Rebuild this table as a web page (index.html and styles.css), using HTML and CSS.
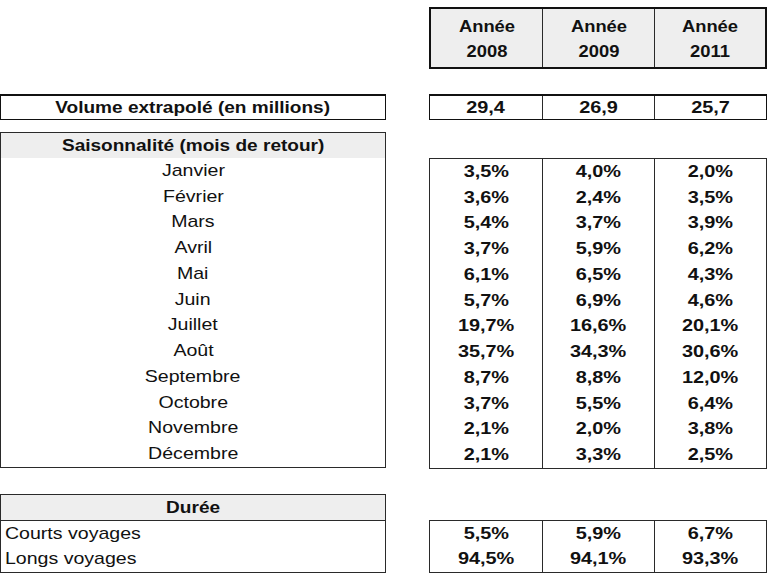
FILE: index.html
```html
<!DOCTYPE html>
<html lang="fr">
<head>
<meta charset="utf-8">
<title>Tableau</title>
<link rel="stylesheet" href="styles.css">
</head>
<body>
<div class="sheet">
  <section class="sec sec-head">
    <div class="left"></div>
    <div class="right box box-thick head">
      <div class="cell"><span class="t">Année<br>2008</span></div>
      <div class="cell"><span class="t">Année<br>2009</span></div>
      <div class="cell"><span class="t">Année<br>2011</span></div>
    </div>
  </section>

  <section class="sec sec-vol">
    <div class="left box box-vol">
      <div class="row title"><span class="t">Volume extrapolé (en millions)</span></div>
    </div>
    <div class="right box box-vol vals">
      <div class="cell num"><span class="t">29,4</span></div>
      <div class="cell num"><span class="t">26,9</span></div>
      <div class="cell num"><span class="t">25,7</span></div>
    </div>
  </section>

  <section class="sec sec-saison">
    <div class="left box">
      <div class="row title gray"><span class="t">Saisonnalité (mois de retour)</span></div>
      <div class="row month"><span class="t">Janvier</span></div>
      <div class="row month"><span class="t">Février</span></div>
      <div class="row month"><span class="t">Mars</span></div>
      <div class="row month"><span class="t">Avril</span></div>
      <div class="row month"><span class="t">Mai</span></div>
      <div class="row month"><span class="t">Juin</span></div>
      <div class="row month"><span class="t">Juillet</span></div>
      <div class="row month"><span class="t">Août</span></div>
      <div class="row month"><span class="t">Septembre</span></div>
      <div class="row month"><span class="t">Octobre</span></div>
      <div class="row month"><span class="t">Novembre</span></div>
      <div class="row month"><span class="t">Décembre</span></div>
    </div>
    <div class="right box offset vals">
      <div class="col">
        <div class="v"><span class="t">3,5%</span></div><div class="v"><span class="t">3,6%</span></div><div class="v"><span class="t">5,4%</span></div><div class="v"><span class="t">3,7%</span></div><div class="v"><span class="t">6,1%</span></div><div class="v"><span class="t">5,7%</span></div><div class="v"><span class="t">19,7%</span></div><div class="v"><span class="t">35,7%</span></div><div class="v"><span class="t">8,7%</span></div><div class="v"><span class="t">3,7%</span></div><div class="v"><span class="t">2,1%</span></div><div class="v"><span class="t">2,1%</span></div>
      </div>
      <div class="col">
        <div class="v"><span class="t">4,0%</span></div><div class="v"><span class="t">2,4%</span></div><div class="v"><span class="t">3,7%</span></div><div class="v"><span class="t">5,9%</span></div><div class="v"><span class="t">6,5%</span></div><div class="v"><span class="t">6,9%</span></div><div class="v"><span class="t">16,6%</span></div><div class="v"><span class="t">34,3%</span></div><div class="v"><span class="t">8,8%</span></div><div class="v"><span class="t">5,5%</span></div><div class="v"><span class="t">2,0%</span></div><div class="v"><span class="t">3,3%</span></div>
      </div>
      <div class="col">
        <div class="v"><span class="t">2,0%</span></div><div class="v"><span class="t">3,5%</span></div><div class="v"><span class="t">3,9%</span></div><div class="v"><span class="t">6,2%</span></div><div class="v"><span class="t">4,3%</span></div><div class="v"><span class="t">4,6%</span></div><div class="v"><span class="t">20,1%</span></div><div class="v"><span class="t">30,6%</span></div><div class="v"><span class="t">12,0%</span></div><div class="v"><span class="t">6,4%</span></div><div class="v"><span class="t">3,8%</span></div><div class="v"><span class="t">2,5%</span></div>
      </div>
    </div>
  </section>

  <section class="sec sec-duree">
    <div class="left box">
      <div class="row title gray sep"><span class="t">Durée</span></div>
      <div class="row dur"><span class="t">Courts voyages</span></div>
      <div class="row dur"><span class="t">Longs voyages</span></div>
    </div>
    <div class="right box offset vals">
      <div class="col"><div class="v vd"><span class="t">5,5%</span></div><div class="v vd"><span class="t">94,5%</span></div></div>
      <div class="col"><div class="v vd"><span class="t">5,9%</span></div><div class="v vd"><span class="t">94,1%</span></div></div>
      <div class="col"><div class="v vd"><span class="t">6,7%</span></div><div class="v vd"><span class="t">93,3%</span></div></div>
    </div>
  </section>
</div>
</body>
</html>
```

FILE: styles.css
```css
html, body {
  margin: 0;
  padding: 0;
  background: #ffffff;
}

body {
  font-family: "Liberation Sans", Arial, sans-serif;
  color: #111111;
}

.sheet {
  width: 770px;
  display: flex;
  flex-direction: column;
}

.sec {
  display: flex;
  align-items: flex-start;
  column-gap: 43px;
}

.left {
  width: 386px;
  flex: none;
  box-sizing: border-box;
}

.right {
  width: 338px;
  flex: none;
  box-sizing: border-box;
}

.box {
  border: 1px solid #2a2a2a;
}

.box-thick {
  border: 2px solid #111111;
}

.box-vol {
  border-top: 2px solid #111111;
  border-color: #111111;
}

.sec-head {
  margin-top: 7px;
}

.sec-vol {
  margin-top: 25px;
}

.sec-saison {
  margin-top: 12px;
}

.sec-duree {
  margin-top: 25px;
}

/* horizontally widened glyphs, like the stretched spreadsheet capture */
.t {
  display: inline-block;
  transform: scaleX(1.14);
  transform-origin: center center;
}

.head {
  height: 62px;
  background: #eeeeee;
  display: grid;
  grid-template-columns: 1fr 1fr 1fr;
}

.head .cell {
  display: flex;
  align-items: center;
  justify-content: center;
  text-align: center;
  font-weight: bold;
  font-size: 17px;
  line-height: 25px;
  padding-top: 1px;
}

.head .t {
  transform: scaleX(1.08);
}

.head .cell + .cell,
.vals > .cell + .cell,
.vals > .col + .col {
  border-left: 1px solid #2a2a2a;
}

.vals {
  display: grid;
  grid-template-columns: 1fr 1fr 1fr;
}

.row {
  height: 25.75px;
  display: flex;
  align-items: center;
  justify-content: center;
}

.box-vol .row,
.box-vol .cell {
  height: 23px;
}

.title {
  font-weight: bold;
  font-size: 17px;
  height: 25px;
}

.title .t {
  transform: scaleX(1.12);
}

.gray {
  background: #eeeeee;
}

.sep {
  border-bottom: 1px solid #2a2a2a;
}

.month {
  font-size: 17px;
}

.month .t {
  transform: scaleX(1.15);
}

.dur {
  justify-content: flex-start;
  padding-left: 4px;
  font-size: 17px;
  height: 25.5px;
}

.dur .t {
  transform: scaleX(1.15);
  transform-origin: left center;
}

.offset {
  margin-top: 26px;
}

.cell.num,
.v {
  display: flex;
  align-items: center;
  justify-content: center;
  font-weight: bold;
  font-size: 17px;
}

.cell.num .t,
.v .t {
  transform: scaleX(1.17);
}

.v {
  height: 25.75px;
}

.v.vd {
  height: 25.5px;
}
```
